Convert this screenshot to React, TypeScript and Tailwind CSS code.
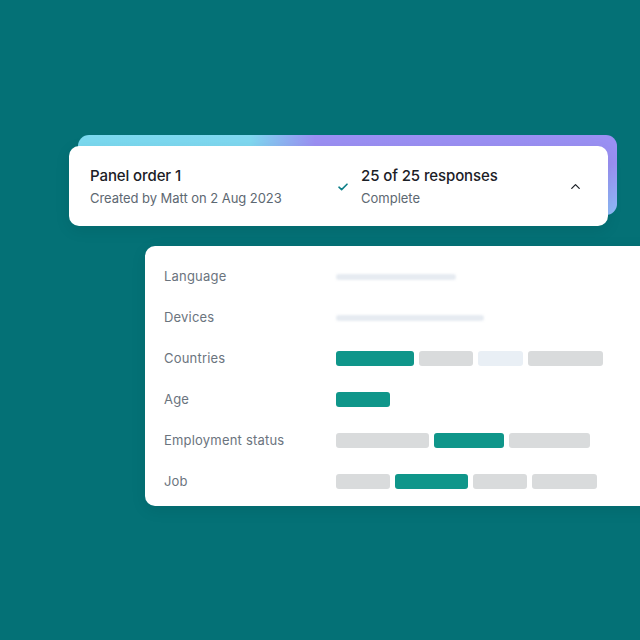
import { ChevronUp } from "lucide-react";

type Bar = { w: number; tone: "teal" | "gray" | "pale" };

const ROWS: { label: string; bars?: Bar[]; line?: number }[] = [
  { label: "Language", line: 120 },
  { label: "Devices", line: 148 },
  {
    label: "Countries",
    bars: [
      { w: 78, tone: "teal" },
      { w: 54, tone: "gray" },
      { w: 45, tone: "pale" },
      { w: 75, tone: "gray" },
    ],
  },
  { label: "Age", bars: [{ w: 54, tone: "teal" }] },
  {
    label: "Employment status",
    bars: [
      { w: 93, tone: "gray" },
      { w: 70, tone: "teal" },
      { w: 81, tone: "gray" },
    ],
  },
  {
    label: "Job",
    bars: [
      { w: 54, tone: "gray" },
      { w: 73, tone: "teal" },
      { w: 54, tone: "gray" },
      { w: 65, tone: "gray" },
    ],
  },
];

const toneClass = {
  teal: "bg-[#0f968a]",
  gray: "bg-[#d9dbdc]",
  pale: "bg-[#e9eff5]",
};

function CheckMark() {
  return (
    <svg width="10" height="8" viewBox="0 0 10 8" fill="none">
      <path d="M1 4.2 3.6 6.6 9 1.2" stroke="#0d7f88" strokeWidth="1.6" strokeLinecap="round" strokeLinejoin="round" />
    </svg>
  );
}

export default function App() {
  return (
    <div className="w-[640px] h-[640px] overflow-hidden bg-[#047176] font-['Inter',sans-serif]">
      <div className="relative ml-[69px] mt-[146px] w-[539px] h-[80px]">
        {/* gradient card peeking out behind the order summary */}
        <div className="absolute left-[9px] -top-[11px] w-[539px] h-[80px] rounded-[11px] bg-[linear-gradient(180deg,rgba(140,195,250,0)_35%,rgba(140,195,250,0.85)_100%),linear-gradient(90deg,#7ad9ef_0%,#7fd8f0_32%,#9b8ff3_44%,#9a90f3_100%)]" />
        <div className="relative h-full rounded-[10px] bg-white flex items-center pl-[21px] pr-[24px] shadow-[0_4px_16px_rgba(0,0,0,0.08)]">
          <div className="w-[248px]">
            <div className="text-[15px] leading-[20px] font-medium text-[#1b2026] tracking-[-0.1px]">Panel order 1</div>
            <div className="mt-[3px] text-[13px] leading-[18px] text-[#5d6872] tracking-[-0.05px]">Created by Matt on 2 Aug 2023</div>
          </div>
          <div className="w-[23px] pt-[2px]">
            <CheckMark />
          </div>
          <div className="flex-1">
            <div className="text-[15px] leading-[20px] font-medium text-[#1b2026] tracking-[-0.1px]">25 of 25 responses</div>
            <div className="mt-[3px] text-[13px] leading-[18px] text-[#5d6872]">Complete</div>
          </div>
          <ChevronUp size={15} strokeWidth={2} className="text-[#1b2026] mr-[1px]" />
        </div>
      </div>

      <div className="ml-[145px] mt-[20px] w-[520px] rounded-[10px] bg-white pt-[23px] pb-[17px] pl-[19px] flex flex-col gap-[26px] shadow-[0_4px_16px_rgba(0,0,0,0.08)]">
        {ROWS.map((row) => (
          <div key={row.label} className="h-[15px] flex items-center">
            <div className="w-[172px] text-[13px] text-[#6b747e] tracking-[0.2px]">{row.label}</div>
            {row.line ? (
              <div className="h-[6px] rounded-full bg-[#e6ebf1] blur-[1px]" style={{ width: row.line }} />
            ) : (
              <div className="flex gap-[5px]">
                {row.bars!.map((b, i) => (
                  <div key={i} className={`h-[15px] rounded-[3px] ${toneClass[b.tone]}`} style={{ width: b.w }} />
                ))}
              </div>
            )}
          </div>
        ))}
      </div>
    </div>
  );
}
